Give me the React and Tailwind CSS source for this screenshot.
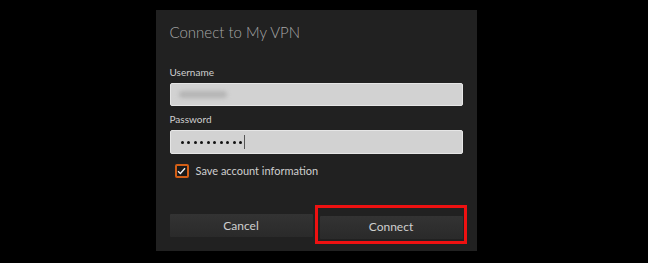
export default function App() {
  const dots = Array.from({ length: 10 });
  return (
    <div className="w-[648px] h-[263px] bg-black flex justify-center pt-[10px]" style={{ fontFamily: 'Lato, "Noto Sans", sans-serif' }}>
      <div className="w-[321px] h-[241px] bg-[#212121] ml-[-16px] px-[14px] flex flex-col">
        <h1 className="mt-[10px] text-[15px] font-light text-[#a8a8a8] leading-[24px]">Connect to My VPN</h1>

        <label className="mt-[21px] text-[10px] text-[#cfcfcf] leading-[14px]">Username</label>
        <div className="mt-[4px] w-[293px] h-[23px] bg-[#d2d2d2] border border-[#e6e6e6] rounded-[2px] flex items-center px-[8px]">
          <div className="w-[48px] h-[7px] bg-[#b4b4b4] rounded-full blur-[2px]"></div>
        </div>

        <label className="mt-[6px] text-[10px] text-[#cfcfcf] leading-[14px]">Password</label>
        <div className="mt-[4px] w-[293px] h-[24px] bg-[#d2d2d2] border border-[#e6e6e6] rounded-[2px] flex items-center pl-[10px]">
          <div className="flex items-center gap-[3.5px]">
            {dots.map((_, i) => (
              <div key={i} className="w-[3px] h-[3px] rounded-full bg-[#111]"></div>
            ))}
          </div>
          <div className="w-px h-[14px] bg-[#555] ml-[2px]"></div>
        </div>

        <div className="mt-[9px] ml-[5px] flex items-center gap-[7px]">
          <div className="w-[14px] h-[14px] border-2 border-[#d35f17] rounded-[2px] bg-[#1a1a1a] flex items-center justify-center">
            <svg width="9" height="8" viewBox="0 0 9 8">
              <path d="M1 4.2 L3.4 6.4 L8 1.2" stroke="#eee" strokeWidth="1.4" fill="none" />
            </svg>
          </div>
          <span className="text-[11px] text-[#cfcfcf] leading-[16px]">Save account information</span>
        </div>

        <div className="mt-[34px] flex items-center gap-[7px]">
          <button className="w-[143px] h-[23px] bg-gradient-to-b from-[#333] to-[#2a2a2a] text-[12px] text-[#cfcfcf] rounded-[1px]">Cancel</button>
          <div className="relative">
            <button className="w-[143px] h-[23px] bg-gradient-to-b from-[#333] to-[#2a2a2a] text-[12px] text-[#cfcfcf] rounded-[1px]">Connect</button>
            <div className="absolute left-[-5px] top-[-8px] w-[152px] h-[39px] border-[3px] border-[#ee1111]"></div>
          </div>
        </div>
      </div>
    </div>
  );
}
